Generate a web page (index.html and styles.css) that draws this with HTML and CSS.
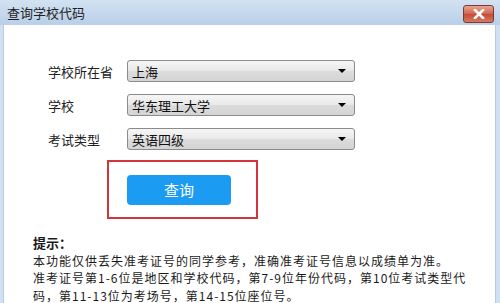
FILE: index.html
```html
<!DOCTYPE html>
<html lang="zh-CN">
<head>
    <meta charset="UTF-8">
    <title>查询学校代码</title>
    <link rel="stylesheet" href="styles.css">
</head>
<body>

<div class="dialog">
    <div class="title-bar">
        <span class="title">查询学校代码</span>
        <button class="close-btn">
            <svg width="12" height="10" viewBox="0 0 12 10">
                <path d="M2 1 L10 9 M10 1 L2 9" stroke="#fff" stroke-width="2.6" stroke-linecap="square"/>
            </svg>
        </button>
    </div>

    <div class="dialog-body">
        <div class="form">
            <div class="form-row">
                <label>学校所在省</label>
                <div class="select"><span>上海</span><i class="arrow"></i></div>
            </div>
            <div class="form-row">
                <label>学校</label>
                <div class="select"><span>华东理工大学</span><i class="arrow"></i></div>
            </div>
            <div class="form-row">
                <label>考试类型</label>
                <div class="select"><span>英语四级</span><i class="arrow"></i></div>
            </div>
        </div>

        <div class="highlight">
            <button class="query-btn">查询</button>
        </div>

        <div class="tips">
            <p class="tips-title">提示：</p>
            <p>本功能仅供丢失准考证号的同学参考，准确准考证号信息以成绩单为准。</p>
            <p>准考证号第1-6位是地区和学校代码，第7-9位年份代码，第10位考试类型代<br>码，第11-13位为考场号，第14-15位座位号。</p>
        </div>
    </div>
</div>

</body>
</html>
```

FILE: styles.css
```css
body {
    margin: 0;
    padding: 0;
    font-family: "Noto Sans CJK SC", "DejaVu Sans", sans-serif;
    background-color: #fff;
}

.dialog {
    width: 500px;
    height: 303px;
    display: flex;
    flex-direction: column;
    background: #cfe0f2;
    overflow: hidden;
}

/* Title bar */
.title-bar {
    height: 25px;
    flex: none;
    display: flex;
    align-items: center;
    justify-content: space-between;
    padding: 0 6px 0 7px;
    background: linear-gradient(#d3e2f2, #b9cfe8);
}

.title {
    font-size: 13px;
    color: #1e1e1e;
    line-height: 1;
    margin-top: -1px;
}

.close-btn {
    width: 31px;
    height: 18px;
    margin-top: 2px;
    padding: 0;
    border: 1px solid #7d3a33;
    border-radius: 3px;
    background: linear-gradient(#e9a593, #d1624d 50%, #c44a35 51%, #d67a62);
    display: flex;
    align-items: center;
    justify-content: center;
}

/* Body */
.dialog-body {
    flex: 1;
    margin: 0 4px 0 3px;
    background: #fff;
    padding: 35px 0 0 0;
    border-left: 1px solid #bccbdc;
    border-right: 1px solid #bccbdc;
}

.form {
    display: flex;
    flex-direction: column;
    gap: 12px;
    padding-left: 44px;
}

.form-row {
    display: flex;
    align-items: center;
}

.form-row label {
    width: 79px;
    font-size: 13px;
    color: #222;
}

.select {
    width: 214px;
    height: 20px;
    border: 1px solid #8b8b8b;
    border-radius: 3px;
    background: linear-gradient(#f6f6f6, #e8e8e8 50%, #dcdcdc 51%, #d4d4d4);
    display: flex;
    align-items: center;
    justify-content: space-between;
    padding: 0 8px 0 4px;
    box-sizing: content-box;
    font-size: 13px;
    color: #111;
}

.arrow {
    width: 0;
    height: 0;
    border-left: 4px solid transparent;
    border-right: 4px solid transparent;
    border-top: 4px solid #000;
}

.highlight {
    width: 147px;
    height: 55px;
    margin: 10px 0 0 103px;
    border: 2px solid #d2363a;
    display: flex;
    align-items: center;
    justify-content: center;
}

.query-btn {
    width: 104px;
    height: 30px;
    margin-right: 7px;
    border: none;
    border-radius: 4px;
    background: #1b9cf2;
    color: #fff;
    font-family: inherit;
    font-size: 15px;
}

.tips {
    margin-top: 15px;
    padding-left: 29px;
    font-size: 12px;
    letter-spacing: 1px;
    color: #1a1a1a;
    line-height: 17.5px;
}

.tips p {
    margin: 0;
}

.tips-title {
    font-weight: bold;
    font-size: 13px;
    letter-spacing: 0;
}
```
